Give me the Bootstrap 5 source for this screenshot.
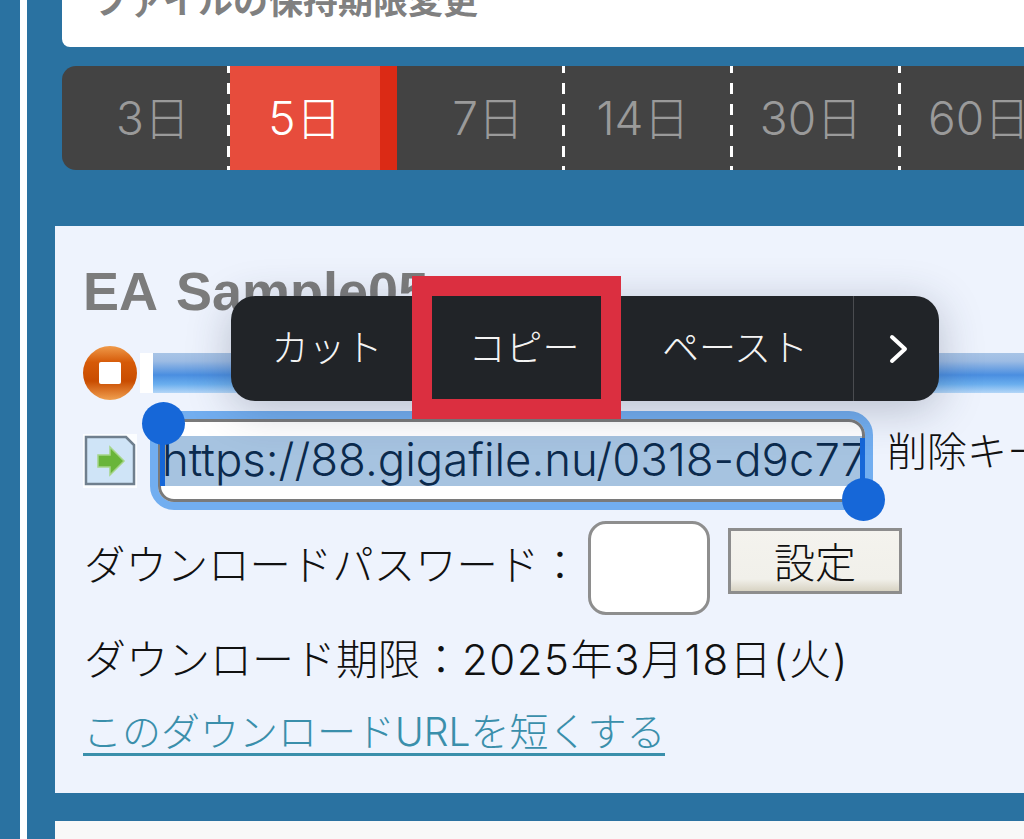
<!DOCTYPE html>
<html lang="ja">
<head>
<meta charset="utf-8">
<title>ファイルの保持期限変更</title>
<link rel="stylesheet" href="https://cdn.jsdelivr.net/npm/bootstrap@5.3.0/dist/css/bootstrap.min.css">
<style>
html,body{height:839px;overflow:hidden}
body{background:#2a72a1;font-family:"Inter","Noto Sans CJK JP",sans-serif;color:#111;position:relative;font-weight:300}
.stage{margin-left:20px;border-left:7px solid #fff;height:839px;padding-left:28px}
.title-card{margin-left:7px;height:47px;background:#fff;border-bottom-left-radius:8px;overflow:hidden;padding-left:31px}
.title-text{font-size:35px;font-weight:700;color:#808080;line-height:34px;margin-top:-16px;white-space:nowrap}
.day-bar{margin-left:7px;margin-top:19px;height:104px;background:#434343;border-radius:14px 0 0 14px;overflow:hidden;width:962px}
.day-tab{flex:0 0 auto;width:168px;height:104px;color:#9a9a9a;font-size:46px;font-weight:300;position:relative;padding-top:1px}
.day-tab::after{content:"";position:absolute;right:0;top:0;bottom:0;width:3px;background:repeating-linear-gradient(#fff 0 11px,transparent 11px 21px);background-position:0 -4px}
.day-first{width:168px;padding-left:14px}
.day-active{width:167px;background:#e74c3c;color:#fff;border-right:17px solid #db2a15}
.day-active::after{display:none}
.day-after{width:168px;padding-left:14px}
.day-wide{padding-right:12px}
.day-last{justify-content:flex-start!important;padding-left:27px}
.day-last::after{display:none}
.main-panel{margin-top:56px;height:567px;background:#eef3fd;padding:37px 0 0 28px;overflow:hidden;position:relative;width:969px}
.file-name{font-family:"Liberation Sans",sans-serif;font-size:54px;font-weight:700;color:#7c7c7c;line-height:56px;white-space:nowrap;word-spacing:5px}
.bar-row{margin-top:27px;height:54px}
.bar-gap{width:13px;height:40px;background:#fff;margin-left:3px;flex:none}
.bar-fill{height:40px;flex:1;background:linear-gradient(#a8c4e6 0,#9dbce4 20%,#4a8ee0 55%,#6aaeee 78%,#b4d6f7 100%)}
.url-row{margin-top:11px;height:99px}
.url-ring{margin-left:13px;width:723px;height:99px;border:8px solid #72aef0;border-radius:24px;flex:none}
.url-field{height:83px;border:3px solid #7a7a7a;border-radius:16px;background:#fff;overflow:hidden;display:flex;align-items:center}
.url-sel{background:#a6c3e0;color:#0b2a4d;height:50px;line-height:48px;font-size:45.5px;white-space:nowrap;width:100%;padding-left:1px}
.key-text{font-size:40px;margin-left:14px;white-space:nowrap;line-height:1;margin-top:-17px}
.pw-row{margin-top:11px;height:93px}
.pw-label{font-size:41.4px;line-height:1;white-space:nowrap;width:505px;flex:none;margin-left:1px;margin-top:-3px}
.pw-input{width:122px;height:94px;border:3px solid #8e8e8e;border-radius:18px;background:#fff;flex:none;margin-left:-1px}
.pw-btn{width:174px;height:66px;margin-left:18px;border:3px solid #8d8d8d;background:linear-gradient(#f4f3ee,#f1f0ea 80%,#d8d3c3);border-radius:0;font-size:41px;color:#111;line-height:1;padding:5px 0 0;margin-top:-13px;font-weight:300}
.limit-row{font-size:42px;line-height:1;margin-top:25px;margin-left:1px;white-space:nowrap}
.date-part{letter-spacing:1.5px}
.short-link{display:inline-block;font-size:39px;color:#3a8fab;margin-top:31px;line-height:1.05;text-decoration:none;border-bottom:3px solid #3a8fab}
.next-panel{margin-top:28px;height:40px;background:#f8f8f8;width:969px}
.popup{position:absolute;left:231px;top:296px;width:708px;height:105px;background:#212428;border-radius:24px;box-shadow:0 8px 44px rgba(40,50,80,.28);color:#f4f4f4;font-size:37px}
.popup-item{height:105px;flex:none}
.popup-cut{width:192px}
.popup-copy{width:202px}
.popup-paste{width:228px;padding-right:8px}
.popup-more{flex:1;border-left:1.5px solid #4a4c50;padding-left:4px}
.copy-mark{position:absolute;left:412px;top:276px;width:209px;height:143px;border:20px solid #db2f40}
.sel-handle{position:absolute;width:43px;height:43px;border-radius:50%;background:#1667d8}
.handle-a{left:142px;top:402px}
.handle-b{left:842px;top:478px}
.sel-caret{position:absolute;width:5px;background:#1667d8}
.caret-a{left:160px;top:430px;height:56px}
.caret-b{left:860px;top:438px;height:50px}
</style>
</head>
<body>
<div class="stage">
  <div class="title-card"><div class="title-text">ファイルの保持期限変更</div></div>
  <div class="day-bar d-flex">
    <div class="day-tab day-first d-flex align-items-center justify-content-center">3日</div>
    <div class="day-tab day-active d-flex align-items-center justify-content-center">5日</div>
    <div class="day-tab day-after d-flex align-items-center justify-content-center">7日</div>
    <div class="day-tab day-wide d-flex align-items-center justify-content-center">14日</div>
    <div class="day-tab day-wide d-flex align-items-center justify-content-center">30日</div>
    <div class="day-tab day-last d-flex align-items-center justify-content-center">60日</div>
  </div>
  <div class="main-panel">
    <div class="file-name">EA Sample05</div>
    <div class="bar-row d-flex align-items-center">
      <svg class="flex-shrink-0" width="54" height="54" viewBox="0 0 54 54" aria-hidden="true">
        <defs><linearGradient id="stopGrad" x1="0" y1="0" x2="0" y2="1"><stop offset="0" stop-color="#ef9a4a"/><stop offset=".3" stop-color="#d65a08"/><stop offset=".65" stop-color="#c94c00"/><stop offset="1" stop-color="#f0a050"/></linearGradient></defs>
        <circle cx="27" cy="27" r="27" fill="url(#stopGrad)"/>
        <rect x="16" y="16" width="22" height="22" rx="2" fill="#fff"/>
      </svg>
      <div class="bar-gap"></div>
      <div class="bar-fill"></div>
    </div>
    <div class="url-row d-flex align-items-center">
      <svg class="flex-shrink-0" width="54" height="54" viewBox="0 0 54 54" aria-hidden="true">
        <rect width="54" height="54" fill="#fbfdff"/>
        <path d="M3 3H43L51 11V50H3Z" fill="#cfe4f7" stroke="#6f7f8e" stroke-width="2.5"/>
        <path d="M15 21H27V13L41 27L27 41V33H15Z" fill="#69b53a" stroke="#a5d58a" stroke-width="1.5"/>
      </svg>
      <div class="url-ring"><div class="url-field"><div class="url-sel">https://88.gigafile.nu/0318-d9c77</div></div></div>
      <div class="key-text">削除キー</div>
    </div>
    <div class="pw-row d-flex align-items-center">
      <div class="pw-label">ダウンロードパスワード：</div>
      <div class="pw-input"></div>
      <button type="button" class="btn pw-btn">設定</button>
    </div>
    <div class="limit-row">ダウンロード期限：<span class="date-part">2025年3月18日(火)</span></div>
    <a href="#" class="short-link">このダウンロードURLを短くする</a>
  </div>
  <div class="next-panel"></div>
</div>
<span class="sel-caret caret-a"></span><span class="sel-caret caret-b"></span>
<span class="sel-handle handle-a"></span><span class="sel-handle handle-b"></span>
<div class="popup d-flex">
  <div class="popup-item popup-cut d-flex align-items-center justify-content-center">カット</div>
  <div class="popup-item popup-copy d-flex align-items-center justify-content-center">コピー</div>
  <div class="popup-item popup-paste d-flex align-items-center justify-content-center">ペースト</div>
  <div class="popup-item popup-more d-flex align-items-center justify-content-center">
    <svg width="20" height="30" viewBox="0 0 20 30" aria-hidden="true"><path d="M3 3L16 15L3 27" fill="none" stroke="#fff" stroke-width="4" stroke-linecap="round" stroke-linejoin="round"/></svg>
  </div>
</div>
<div class="copy-mark"></div>
</body>
</html>
